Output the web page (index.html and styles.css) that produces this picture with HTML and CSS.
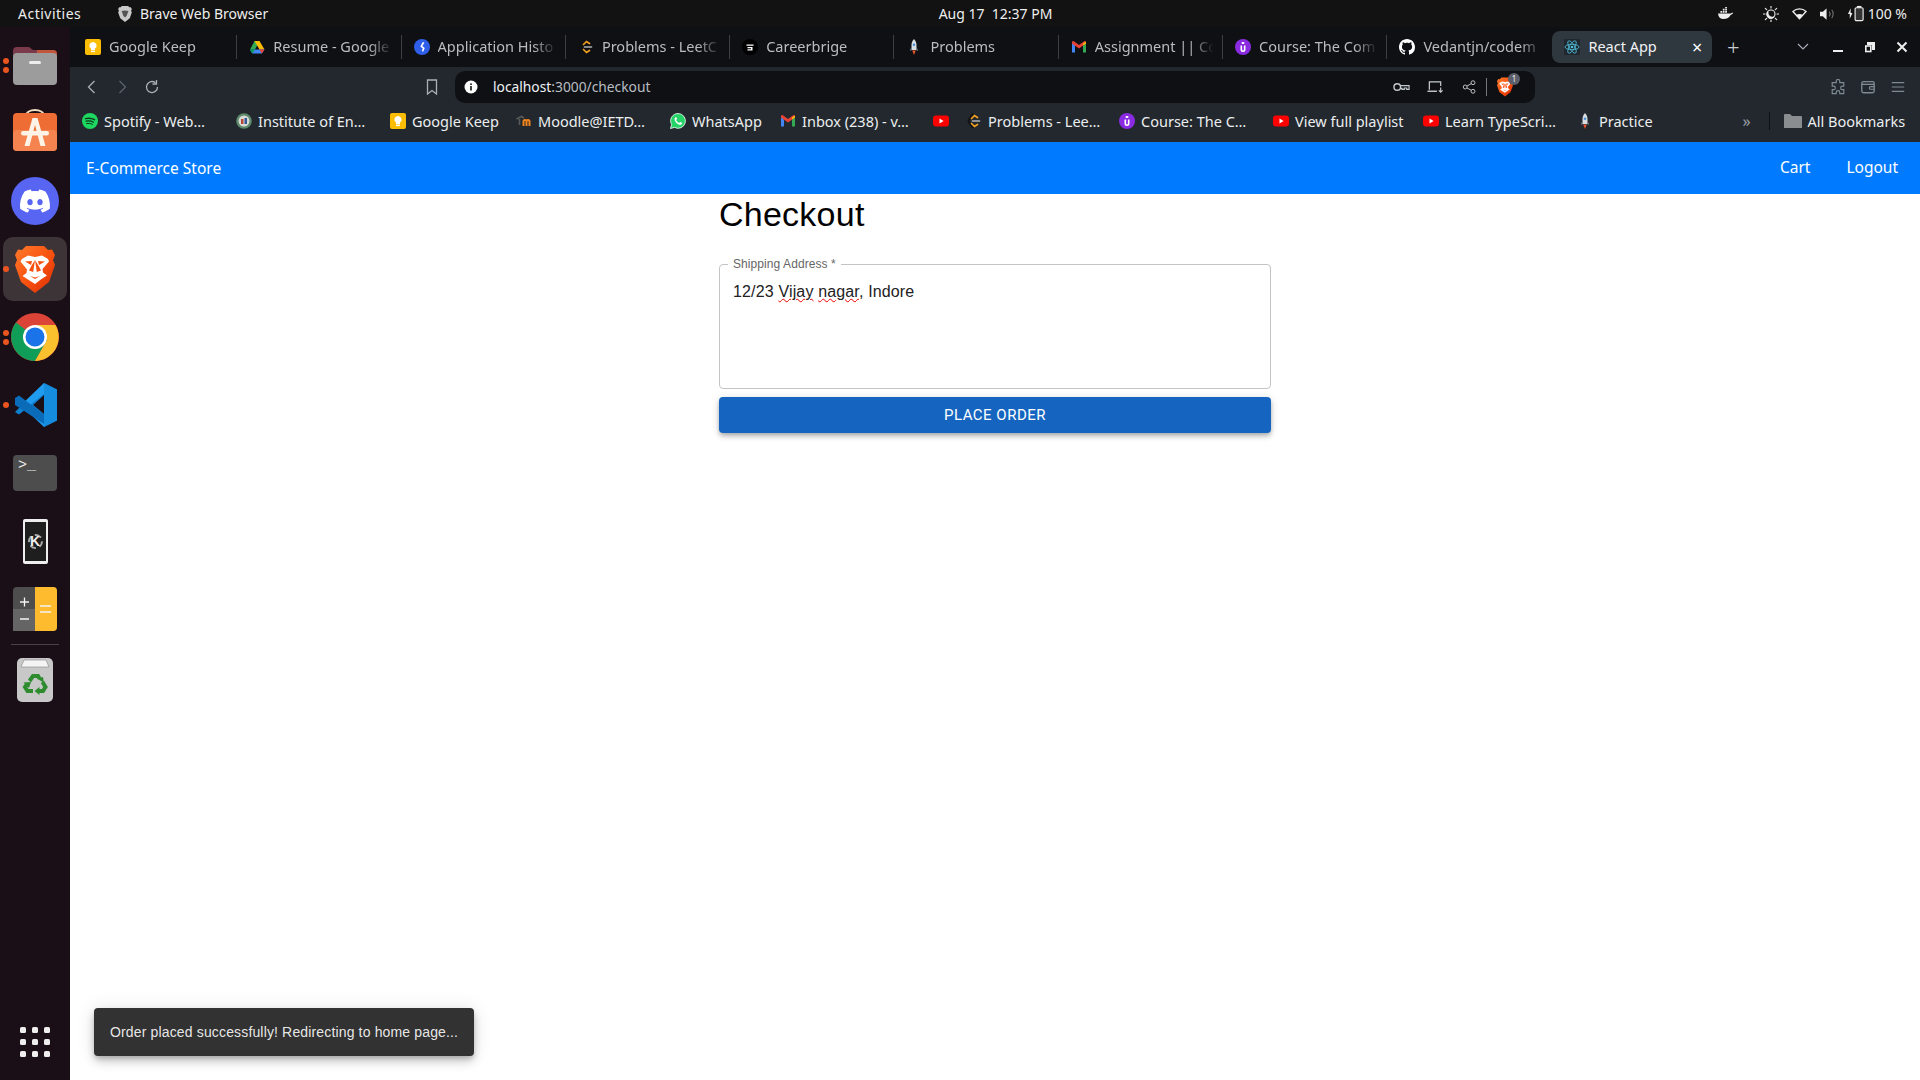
FILE: index.html
```html
<!DOCTYPE html>
<html lang="en">
<head>
<meta charset="UTF-8" />
<title>React App</title>
<link rel="stylesheet" href="styles.css">
</head>
<body>
<svg class="icon-defs" aria-hidden="true">
  <defs>
    <linearGradient id="brave-grad" x1="0" y1="0" x2="1" y2="1">
      <stop offset="0" stop-color="#ff7a2a"/>
      <stop offset=".55" stop-color="#f7500f"/>
      <stop offset="1" stop-color="#d92b06"/>
    </linearGradient>
    <symbol id="i-keep" viewBox="0 0 16 16">
      <rect x="0" y="0" width="16" height="16" rx="2" fill="#fbbc04"/>
      <path d="M8 3a3.6 3.6 0 0 0-2 6.6V11h4V9.600A3.600 3.600 0 0 0 8 3z" fill="#fff"/>
      <rect x="6" y="11.600" width="4" height="1.500" fill="#fff"/>
    </symbol>
    <symbol id="i-drive" viewBox="0 0 16 16">
      <path d="M5.500 1.500h5L6 10H1z" fill="#34a853" transform="translate(0 .5)"/>
      <path d="M5.500 2h5l5 8.500h-5z" fill="#fbbc04"/>
      <path d="M1 11l2.400 3.500h9.400l2.700-4H5z" fill="#4285f4"/>
      <path d="M1 10.500l2.400 4L6 10.500z" fill="#0f9d58"/>
      <path d="M15.500 10.500l-2.700 4-2.300-4z" fill="#ea4335"/>
    </symbol>
    <symbol id="i-apphist" viewBox="0 0 16 16">
      <circle cx="8" cy="8" r="8" fill="#2f5fe8"/>
      <path d="M8.800 3l1.700.8-2.200 3.100 2.500 2-1.700 3.800-1.300-.7 1-2.600-2.500-2z" fill="#fff"/>
    </symbol>
    <symbol id="i-leet" viewBox="0 0 16 16">
      <path d="M7 .5L3 6.500c-.8 1.200-.8 2 0 3l4 5.500" fill="none" stroke="#111" stroke-width="1.800"/>
      <path d="M5.500 5.500L8.500 2.500l3 2" fill="none" stroke="#f0a020" stroke-width="1.700" stroke-linecap="round"/>
      <path d="M5.500 10.500l3 3 3-2" fill="none" stroke="#f0a020" stroke-width="1.700" stroke-linecap="round"/>
      <path d="M6.500 8h7" stroke="#b3b3b3" stroke-width="1.600" stroke-linecap="round"/>
    </symbol>
    <symbol id="i-career" viewBox="0 0 16 16">
      <circle cx="8" cy="8" r="8" fill="#000"/>
      <path d="M4.500 5.500h7v1.200h-7zM5.500 8h5v3.500h-5V10.300h3.500V9.200H5.500z" fill="#fff"/>
    </symbol>
    <symbol id="i-rocket" viewBox="0 0 16 16">
      <path d="M8 0c1.800 1.800 2.500 4 2.500 6v5h-5V6C5.500 4 6.200 1.800 8 0z" fill="#d8dde2"/>
      <circle cx="8" cy="5.800" r="1.300" fill="#4a90d9"/>
      <path d="M5.500 8L3.800 11.500h1.700zM10.500 8l1.700 3.500h-1.700z" fill="#7a8794"/>
      <path d="M6.200 11.500h3.600L8 16z" fill="#e8552b"/>
    </symbol>
    <symbol id="i-gmail" viewBox="0 0 16 16">
      <path d="M1 3.500v10h3V6.500z" fill="#4285f4"/>
      <path d="M15 3.500v10h-3V6.500z" fill="#34a853"/>
      <path d="M1 2.500v2L8 9.500l7-5v-2l-1.500-.5L8 6 2.500 2z" fill="#ea4335"/>
      <path d="M12 4.500L15 2.500v2L12 6.500z" fill="#fbbc04"/>
    </symbol>
    <symbol id="i-course" viewBox="0 0 16 16">
      <circle cx="8" cy="8" r="8" fill="#8a2be2"/>
      <path d="M5.500 6.500v4a2.500 2.500 0 0 0 5 0v-4h-1.600v4a.9.9 0 0 1-1.800 0v-4z" fill="#fff"/>
      <rect x="6.500" y="3" width="3" height="2" rx="1" fill="#fff"/>
    </symbol>
    <symbol id="i-github" viewBox="0 0 16 16">
      <path fill="#fff" d="M8 0C3.580 0 0 3.580 0 8c0 3.540 2.290 6.530 5.470 7.590.4.070.55-.17.55-.38 0-.19-.01-.82-.01-1.490-2.010.37-2.530-.49-2.690-.94-.09-.23-.48-.94-.82-1.130-.28-.15-.68-.52-.01-.53.63-.01 1.080.58 1.230.82.72 1.210 1.870.87 2.330.66.07-.52.28-.87.51-1.070-1.780-.2-3.640-.89-3.640-3.950 0-.87.31-1.590.82-2.150-.08-.2-.36-1.020.08-2.120 0 0 .67-.21 2.200.82.64-.18 1.320-.27 2-.27.68 0 1.360.09 2 .27 1.530-1.040 2.200-.82 2.200-.82.44 1.100.16 1.920.08 2.120.51.56.82 1.270.82 2.150 0 3.070-1.870 3.750-3.650 3.950.29.25.54.73.54 1.480 0 1.070-.01 1.930-.01 2.200 0 .21.15.46.55.38A8.013 8.013 0 0 0 16 8c0-4.420-3.580-8-8-8z"/>
    </symbol>
    <symbol id="i-react" viewBox="0 0 16 16">
      <rect width="16" height="16" rx="1" fill="#20272e"/>
      <g fill="none" stroke="#4fc3dc" stroke-width=".8">
        <ellipse cx="8" cy="8" rx="7" ry="2.700"/>
        <ellipse cx="8" cy="8" rx="7" ry="2.700" transform="rotate(60 8 8)"/>
        <ellipse cx="8" cy="8" rx="7" ry="2.700" transform="rotate(120 8 8)"/>
      </g>
      <circle cx="8" cy="8" r="1.300" fill="#4fc3dc"/>
    </symbol>
    <symbol id="i-spotify" viewBox="0 0 16 16">
      <circle cx="8" cy="8" r="8" fill="#1ed760"/>
      <g fill="none" stroke="#0c3a1c" stroke-linecap="round">
        <path d="M3.500 5.600c3-.8 6.200-.5 9 1" stroke-width="1.500"/>
        <path d="M4 8.200c2.600-.6 5.200-.3 7.500 1" stroke-width="1.200"/>
        <path d="M4.500 10.600c2.200-.5 4.300-.2 6 .8" stroke-width="1"/>
      </g>
    </symbol>
    <symbol id="i-ietdavv" viewBox="0 0 16 16">
      <circle cx="8" cy="8" r="7.800" fill="#5d8a6c"/>
      <circle cx="8" cy="8" r="5.500" fill="#d8dcd4"/>
      <path d="M5 6h2.500v5H5z" fill="#b5473c"/>
      <path d="M8.500 5H11v6H8.500z" fill="#34589a"/>
    </symbol>
    <symbol id="i-moodle" viewBox="0 0 16 16">
      <path d="M7.500 13V8.500c0-2 3-2 3 0V13M10.500 8.500c0-2 3-2 3 0V13" fill="none" stroke="#f2841d" stroke-width="2"/>
      <path d="M.5 6l5-2.500 2.500 1.500M3.500 6v6" fill="none" stroke="#5b5b5b" stroke-width="1.600"/>
    </symbol>
    <symbol id="i-whatsapp" viewBox="0 0 16 16">
      <path d="M8 .5a7.400 7.400 0 0 0-6.400 11.100L.5 15.500l4-1.100A7.400 7.400 0 1 0 8 .5z" fill="#25d366" stroke="#fff" stroke-width=".8"/>
      <path d="M5.500 4.200c-.9.800-1.200 2-.5 3.500.9 2 2.500 3.500 4.500 4 1.200.3 2.300-.3 2.700-1.300l-.2-.6-1.900-.9-.9 1c-1.200-.4-2.500-1.700-3-3l.8-.9-.8-1.900z" fill="#fff"/>
    </symbol>
    <symbol id="i-youtube" viewBox="0 0 16 16">
      <rect y="2.500" width="16" height="11" rx="3" fill="#f00"/>
      <path d="M6.500 5.600v4.800L10.600 8z" fill="#fff"/>
    </symbol>
    <symbol id="i-brave" viewBox="0 0 40 47">
      <path d="M11 0h18l4 4 4-.5 3 5.500-2 5 2 5-6 17-14 11L6 36 0 19l2-5-2-5 3-5.500L7 4z" fill="url(#brave-grad)"/>
      <path d="M7 13l6-3.500 7 1.500 7-1.500 6 3.500 1 2.500-6.500 7.500.5 3.500 4 3-5.500 3.500L20 38l-7-4.500L7.500 30l4-3 .5-3.500L5.500 15.500z" fill="#fff"/>
      <path d="M10 15.500l7-.5-1 4zM30 15.500l-7-.5 1 4z" fill="#f7500f"/>
      <path d="M20 14l-1.800 12-4.200-1.500 2-4zM20 14l1.800 12 4.200-1.500-2-4z" fill="#f7500f"/>
      <path d="M15 30l5 1.500 5-1.500-5 3z" fill="#f7500f"/>
    </symbol>
  </defs>
</svg>

<header class="topbar">
  <div class="topbar-left">
    <span class="activities">Activities</span>
    <svg class="topbar-brave" viewBox="0 0 40 47"><path d="M11 0h18l4 4 4-.5 3 5.500-2 5 2 5-6 17-14 11L6 36 0 19l2-5-2-5 3-5.500L7 4z" fill="#c9c9c9"/><path d="M10 15l10-2 10 2-5 14-5 5-5-5z" fill="#555"/></svg>
    <span>Brave Web Browser</span>
  </div>
  <div class="clock">Aug 17&nbsp; 12:37 PM</div>
  <div class="tray">
    <svg class="tray-docker" viewBox="0 0 20 16" fill="#eee"><path d="M0 8h16c.6-1 1.800-1.300 3-.8-.5 1.500-1.500 2.200-3 2.300C14.500 13 11 15 7 15c-4 0-6.500-2.500-7-7z"/><path d="M3 5h2.200v2.200H3zM6 5h2.200v2.200H6zM9 5h2.200v2.200H9zM6 2h2.200v2.200H6zM9 2h2.200v2.200H9zM9-.8h2.200v2.200H9z"/></svg>
    <svg class="tray-night" viewBox="0 0 16 16" fill="none" stroke="#eee" stroke-width="1.100"><circle cx="8" cy="8" r="4"/><path d="M5 5.500a4 4 0 0 0 6 5.500 4.500 4.500 0 0 1-6-5.500z" fill="#eee"/><path d="M8 0v2M8 14v2M0 8h2M14 8h2M2.300 2.300l1.400 1.400M12.300 12.300l1.400 1.400M2.300 13.700l1.400-1.400M12.300 3.700l1.400-1.400" stroke-linecap="round"/></svg>
    <svg class="tray-wifi" viewBox="0 0 16 12"><path d="M8 11L1 3.300C5-.3 11-.3 15 3.300z" fill="none" stroke="#eee" stroke-width="1.400"/><path d="M8 11L4.500 7c2-1.500 5-1.500 7 0z" fill="#eee"/></svg>
    <svg class="tray-volume" viewBox="0 0 16 14"><path d="M0 4.500h3L7 1v12L3 9.500H0z" fill="#eee"/><path d="M10 4.500c1 1.500 1 3.500 0 5M12.500 2.500c2 2.500 2 6.500 0 9" fill="none" stroke="#777" stroke-width="1.100"/></svg>
    <svg class="tray-battery" viewBox="0 0 18 18"><path d="M3 3L0 9.500h2V15l3-6.500H3z" fill="#eee"/><rect x="8" y="2.500" width="9" height="14.500" rx="1.500" fill="#333" stroke="#eee" stroke-width="1.300"/><rect x="10" y=".5" width="5" height="2" fill="#eee"/></svg>
    <span class="battery-text">100 %</span>
  </div>
</header>

<div class="workspace">
  <aside class="dock">
    <div class="dock-item">
      <span class="dots"><i></i><i></i></span>
      <svg class="dock-icon" viewBox="0 0 44 40">
        <path d="M0 6a4 4 0 0 1 4-4h12l4 3h20a4 4 0 0 1 4 4v10H0z" fill="#7b3a4c"/>
        <path d="M24 5h16a4 4 0 0 1 4 4v6H24z" fill="#c0573a"/>
        <rect y="8" width="44" height="32" rx="4" fill="#9c9c9c"/>
        <rect x="16" y="16" width="12" height="3" rx="1.500" fill="#eee"/>
      </svg>
    </div>
    <div class="dock-item">
      <svg class="dock-store" viewBox="0 0 44 44">
        <path d="M13 7c0-8 18-8 18 0" fill="none" stroke="#f0dcc0" stroke-width="1.800"/>
        <rect y="4" width="44" height="38" rx="4" fill="#ee6d35"/>
        <rect y="21" width="44" height="21" rx="4" fill="#f4834f"/>
        <path d="M19.500 9h5l8 28h-5l-5.500-21-5.500 21h-5z" fill="#fdf3e7"/>
        <rect x="8" y="22" width="28" height="4.500" rx="2.250" fill="#fdf3e7"/>
      </svg>
    </div>
    <div class="dock-item">
      <svg class="dock-circle" viewBox="0 0 48 48">
        <circle cx="24" cy="24" r="24" fill="#5865f2"/>
        <g transform="translate(9 9) scale(1.250)"><path fill="#fff" d="M20.317 4.370a19.791 19.791 0 0 0-4.885-1.515.074.074 0 0 0-.079.037c-.211.375-.445.865-.608 1.250-1.845-.276-3.680-.276-5.487 0-.164-.393-.406-.874-.618-1.250a.077.077 0 0 0-.079-.037 19.736 19.736 0 0 0-4.885 1.515.07.07 0 0 0-.032.028C.533 9.046-.319 13.580.099 18.058a.082.082 0 0 0 .031.056c2.053 1.508 4.041 2.423 5.993 3.029a.078.078 0 0 0 .084-.028c.462-.630.873-1.295 1.226-1.994a.076.076 0 0 0-.042-.106c-.653-.248-1.274-.550-1.872-.892a.077.077 0 0 1-.008-.128c.126-.094.252-.192.372-.291a.074.074 0 0 1 .078-.011c3.928 1.793 8.180 1.793 12.061 0a.074.074 0 0 1 .079.010c.120.099.246.198.373.292a.077.077 0 0 1-.007.128 12.299 12.299 0 0 1-1.873.891.077.077 0 0 0-.041.107c.360.698.772 1.363 1.225 1.993a.076.076 0 0 0 .084.029c1.961-.607 3.950-1.522 6.002-3.029a.077.077 0 0 0 .031-.055c.500-5.177-.838-9.674-3.548-13.660a.061.061 0 0 0-.031-.029zM8.020 15.331c-1.183 0-2.157-1.086-2.157-2.419 0-1.333.956-2.419 2.157-2.419 1.211 0 2.176 1.095 2.157 2.419 0 1.333-.956 2.419-2.157 2.419zm7.975 0c-1.183 0-2.157-1.086-2.157-2.419 0-1.333.955-2.419 2.157-2.419 1.211 0 2.176 1.095 2.157 2.419 0 1.333-.946 2.419-2.157 2.419z"/></g>
      </svg>
    </div>
    <div class="dock-item is-active">
      <span class="dots"><i></i></span>
      <svg class="dock-brave"><use href="#i-brave"/></svg>
    </div>
    <div class="dock-item">
      <span class="dots"><i></i><i></i></span>
      <svg class="dock-circle" viewBox="0 0 48 48">
        <circle cx="24" cy="24" r="24" fill="#db4437"/>
        <path d="M24 24L5 9.500A24 24 0 0 0 24 48l12-21z" fill="#0f9d58"/>
        <path d="M24 12h20.500a24 24 0 0 1-20.500 36l12-21z" fill="#fbc02d"/>
        <circle cx="24" cy="24" r="12" fill="#fff"/>
        <circle cx="24" cy="24" r="9.500" fill="#1a73e8"/>
      </svg>
    </div>
    <div class="dock-item">
      <span class="dots"><i></i></span>
      <svg class="dock-icon" viewBox="0 0 44 44">
        <path d="M31 0l13 6.500v31L31 44 8 22z" fill="#1f9cf0"/>
        <path d="M31 0v44l13-6.500v-31z" fill="#0f7fd0" opacity=".55"/>
        <path d="M31 11L13 25l-7-5.500-4 2.500 7 0L2 29l4 2.500 7-5.500 18 14V31L20 22l11-9z" fill="#0f7fd0"/>
        <path d="M2 15l4-2.500 25 19V41L2 22z" fill="#0a6cb8"/>
        <path d="M31 12v19l-11-9z" fill="#1a1016"/>
      </svg>
    </div>
    <div class="dock-item">
      <div class="terminal">
        <span class="prompt">&gt;_</span>
      </div>
    </div>
    <div class="dock-item">
      <div class="phone"><span class="kde-gear"></span><span class="kde">K</span></div>
    </div>
    <div class="dock-item">
      <svg class="dock-icon" viewBox="0 0 44 44">
        <rect width="44" height="44" rx="4" fill="#4d4d4d"/>
        <rect y="22" width="22" height="22" fill="#656565"/>
        <path d="M22 0h18a4 4 0 0 1 4 4v36a4 4 0 0 1-4 4H22z" fill="#fdbb2d"/>
        <path d="M7 15h9M11.500 10.500v9M7 32h9M27 19h11M27 25h11" stroke="#f4f4f4" stroke-width="1.300"/>
      </svg>
    </div>
    <div class="dock-sep"></div>
    <div class="dock-item">
      <svg class="dock-trash" viewBox="0 0 36 44">
        <rect width="36" height="44" rx="5" fill="#c8c8c8"/>
        <path d="M4 9l3-7h22l3 7z" fill="#f4f4f4" stroke="#888" stroke-width=".6"/>
        <g fill="none" stroke="#2e8b2e" stroke-width="4">
          <path d="M12.500 23l3.500-5h5l1.500 2.500"/>
          <path d="M25.500 24l3 5-2.500 4h-4"/>
          <path d="M16 33h-5.500l-2.500-4 2.500-3.500"/>
        </g>
        <g fill="#2e8b2e">
          <path d="M20 20.500l6-1.500 1 6z"/>
          <path d="M22.500 29v8l-5-4z"/>
          <path d="M6.500 24.500l7.500-.5-2 6z"/>
        </g>
      </svg>
    </div>
    <div class="app-grid">
      <i></i><i></i><i></i><i></i><i></i><i></i><i></i><i></i><i></i>
    </div>
  </aside>

  <div class="browser">
    <div class="tabstrip">
      <div class="tab"><svg class="favicon"><use href="#i-keep"/></svg><span class="tab-title">Google Keep</span></div>
      <div class="tab"><svg class="favicon"><use href="#i-drive"/></svg><span class="tab-title">Resume - Google</span></div>
      <div class="tab"><svg class="favicon"><use href="#i-apphist"/></svg><span class="tab-title">Application Histo</span></div>
      <div class="tab"><svg class="favicon"><use href="#i-leet"/></svg><span class="tab-title">Problems - LeetC</span></div>
      <div class="tab"><svg class="favicon"><use href="#i-career"/></svg><span class="tab-title">Careerbrige</span></div>
      <div class="tab"><svg class="favicon"><use href="#i-rocket"/></svg><span class="tab-title">Problems</span></div>
      <div class="tab"><svg class="favicon"><use href="#i-gmail"/></svg><span class="tab-title">Assignment || Co</span></div>
      <div class="tab"><svg class="favicon"><use href="#i-course"/></svg><span class="tab-title">Course: The Com</span></div>
      <div class="tab tab-last"><svg class="favicon"><use href="#i-github"/></svg><span class="tab-title">Vedantjn/codem</span></div>
      <div class="tab is-active"><svg class="favicon"><use href="#i-react"/></svg><span class="tab-title">React App</span><span class="tab-close">&times;</span></div>
      <span class="new-tab">+</span>
      <div class="window-controls">
        <svg class="wc wc-list" viewBox="0 0 12 8"><path d="M1 1l5 5 5-5" fill="none" stroke="#aab" stroke-width="1.200"/></svg>
        <svg class="wc" viewBox="0 0 12 12"><path d="M1 10h10" stroke="#eee" stroke-width="2"/></svg>
        <svg class="wc" viewBox="0 0 12 12"><path d="M3 1h8v8H8V4H3z" fill="#eee"/><rect x="1.800" y="5" width="5" height="5.500" fill="none" stroke="#eee" stroke-width="1.600"/></svg>
        <svg class="wc" viewBox="0 0 12 12"><path d="M1.500 1.500l9 9M10.500 1.500l-9 9" stroke="#eee" stroke-width="2"/></svg>
      </div>
    </div>

    <div class="toolbar">
      <svg class="tool" viewBox="0 0 16 16"><path d="M10.500 2L4.500 8l6 6" fill="none" stroke="#a9b0b6" stroke-width="1.300"/></svg>
      <svg class="tool" viewBox="0 0 16 16"><path d="M5.500 2l6 6-6 6" fill="none" stroke="#5c646b" stroke-width="1.300"/></svg>
      <svg class="tool" viewBox="0 0 16 16"><path d="M13.500 8A5.500 5.500 0 1 1 11.500 3.800" fill="none" stroke="#a9b0b6" stroke-width="1.300"/><path d="M12.500 1v4h-4" fill="none" stroke="#a9b0b6" stroke-width="1.300"/></svg>
      <svg class="tool tool-bookmark" viewBox="0 0 16 16"><path d="M3.500 1h9v14L8 11.500 3.500 15z" fill="none" stroke="#a9b0b6" stroke-width="1.300"/></svg>
      <div class="addressbar">
        <svg class="addr-info" viewBox="0 0 14 14"><circle cx="7" cy="7" r="6.500" fill="#fff"/><rect x="6.200" y="6" width="1.600" height="4.500" fill="#111"/><rect x="6.200" y="3.400" width="1.600" height="1.600" fill="#111"/></svg>
        <span class="url"><b>localhost</b>:3000/checkout</span>
        <svg class="addr-tool" viewBox="0 0 18 12"><circle cx="4.500" cy="6" r="3.500" fill="none" stroke="#c6cbd0" stroke-width="1.500"/><path d="M8 4.500h9v4h-2.500V7H12v1.500H9.500V7.500H8" fill="none" stroke="#c6cbd0" stroke-width="1.200"/></svg>
        <svg class="addr-tool" viewBox="0 0 18 14"><path d="M2.500 10V1.500h12V6" fill="none" stroke="#c6cbd0" stroke-width="1.300"/><path d="M.5 11.500h10" stroke="#c6cbd0" stroke-width="1.500"/><path d="M14.500 7.500v5M12.500 10.500l2 2 2-2" fill="none" stroke="#c6cbd0" stroke-width="1.200"/></svg>
        <svg class="addr-tool addr-share" viewBox="0 0 18 18"><g fill="none" stroke="#c6cbd0" stroke-width="1.200"><circle cx="3.500" cy="9" r="2.500"/><circle cx="13.500" cy="3.500" r="2.500"/><circle cx="13.500" cy="14.500" r="2.500"/><path d="M5.700 7.800l5.600-3.100M5.700 10.200l5.600 3.100"/></g></svg>
        <span class="addr-sep"></span>
        <span class="shields"><svg><use href="#i-brave"/></svg><span class="shields-badge">1</span></span>
      </div>
      <svg class="tool tool-ext" viewBox="0 0 18 18"><path d="M7 2.500a2 2 0 0 1 4 0V4h4.500v4H14a2 2 0 0 0 0 4h1.500v4.500H11V15a2 2 0 0 0-4 0v1.500H2.500V12H4a2 2 0 0 0 0-4H2.500V4H7z" fill="none" stroke="#7f8a92" stroke-width="1.300"/></svg>
      <svg class="tool" viewBox="0 0 18 18"><rect x="2" y="3" width="14" height="12.500" rx="2" fill="none" stroke="#7f8a92" stroke-width="1.500"/><path d="M2 6h14" stroke="#7f8a92" stroke-width="1.500"/><path d="M16 8.500h-4a1.500 1.500 0 0 0 0 3h4" fill="none" stroke="#7f8a92" stroke-width="1.300"/></svg>
      <svg class="tool" viewBox="0 0 18 18"><path d="M2 4h14M2 9h14M2 14h14" stroke="#7f8a92" stroke-width="1.300"/></svg>
    </div>

    <nav class="bookmarks">
      <a class="bm"><svg class="favicon"><use href="#i-spotify"/></svg>Spotify - Web…</a>
      <a class="bm"><svg class="favicon"><use href="#i-ietdavv"/></svg>Institute of En…</a>
      <a class="bm"><svg class="favicon"><use href="#i-keep"/></svg>Google Keep</a>
      <a class="bm"><svg class="favicon"><use href="#i-moodle"/></svg>Moodle@IETD…</a>
      <a class="bm"><svg class="favicon"><use href="#i-whatsapp"/></svg>WhatsApp</a>
      <a class="bm"><svg class="favicon"><use href="#i-gmail"/></svg>Inbox (238) - v…</a>
      <a class="bm"><svg class="favicon"><use href="#i-youtube"/></svg></a>
      <a class="bm"><svg class="favicon"><use href="#i-leet"/></svg>Problems - Lee…</a>
      <a class="bm"><svg class="favicon"><use href="#i-course"/></svg>Course: The C…</a>
      <a class="bm"><svg class="favicon"><use href="#i-youtube"/></svg>View full playlist</a>
      <a class="bm"><svg class="favicon"><use href="#i-youtube"/></svg>Learn TypeScri…</a>
      <a class="bm"><svg class="favicon"><use href="#i-rocket"/></svg>Practice</a>
      <span class="bm-more">»</span>
      <span class="bm-sep"></span>
      <a class="bm bm-all">
        <svg class="bm-folder" viewBox="0 0 18 16"><path d="M0 2a1 1 0 0 1 1-1h5l2 2h9a1 1 0 0 1 1 1v11H0z" fill="#8a8d90"/></svg>
        All Bookmarks
      </a>
    </nav>

    <div class="page">
      <div class="appbar">
        <span class="brand">E-Commerce Store</span>
        <div class="appbar-links">
          <a>Cart</a>
          <a>Logout</a>
        </div>
      </div>
      <main class="checkout">
        <h1>Checkout</h1>
        <div class="field">
          <label>Shipping Address *</label>
          <div class="field-value">12/23 <span class="misspelled">Vijay</span> <span class="misspelled">nagar</span>, Indore</div>
        </div>
        <button class="place-order">Place Order</button>
      </main>
      <div class="toast">Order placed successfully! Redirecting to home page...</div>
    </div>
  </div>
</div>
</body>
</html>
```

FILE: styles.css
```css
/* Reset & base */
* {
  box-sizing: border-box;
}
html, body {
  margin: 0;
  height: 100%;
  overflow: hidden;
}
body {
  width: 1920px;
  height: 1080px;
  display: flex;
  flex-direction: column;
  font-family: "Noto Sans", sans-serif;
  background: #fff;
}
.icon-defs {
  position: absolute;
  width: 0;
  height: 0;
}

/* GNOME top bar */
.topbar {
  height: 27px;
  background: #121212;
  color: #eee;
  font-size: 14px;
  display: grid;
  grid-template-columns: 1fr auto 1fr;
  align-items: center;
  padding: 0 13px 0 18px;
}
.topbar-left {
  display: flex;
  align-items: center;
}
.activities {
  width: 100px;
  letter-spacing: 0.5px;
}
.topbar-brave {
  width: 14px;
  height: 16px;
  margin-right: 8px;
}
.clock {
  font-size: 14px;
  margin-left: 66px;
}
.tray {
  display: flex;
  align-items: center;
  justify-content: flex-end;
}
.tray svg {
  display: block;
}
.tray-docker { width: 16px; height: 13px; margin-right: 29px; }
.tray-night { width: 16px; height: 16px; margin-right: 13px; }
.tray-wifi { width: 15px; height: 12px; margin-right: 13px; }
.tray-volume { width: 15px; height: 14px; margin-right: 13px; }
.tray-battery { width: 16px; height: 17px; margin-right: 4px; }

.workspace {
  flex: 1;
  display: flex;
  min-height: 0;
}

/* Dock */
.dock {
  width: 70px;
  background: #1a0f17;
  padding-top: 4px;
  display: flex;
  flex-direction: column;
  align-items: center;
  flex-shrink: 0;
}
.dock-item {
  position: relative;
  width: 64px;
  height: 68px;
  display: flex;
  align-items: center;
  justify-content: center;
}
.dock-item.is-active::before {
  content: "";
  position: absolute;
  inset: 2px 0;
  background: #3d3438;
  border-radius: 10px;
}
.dock-item svg,
.dock-item > div {
  position: relative;
}
.dots {
  position: absolute;
  left: 0;
  top: 0;
  bottom: 0;
  width: 6px;
  display: flex;
  flex-direction: column;
  justify-content: center;
  gap: 3px;
  z-index: 1;
}
.dots i {
  width: 6px;
  height: 6px;
  border-radius: 50%;
  background: #e95420;
}
.dock-icon { width: 44px; height: 44px; }
.dock-store { width: 44px; height: 44px; margin-bottom: 4px; }
.dock-circle { width: 48px; height: 48px; }
.dock-brave { width: 40px; height: 47px; }
.dock-trash { width: 36px; height: 44px; }
.terminal {
  width: 44px;
  height: 36px;
  background: #4d4d4d;
  border-radius: 4px;
  color: #eee;
  font: 15px/1 "Liberation Mono", monospace;
  padding: 3px 5px;
}
.phone {
  width: 25px;
  height: 45px;
  background: #1e1e1e;
  border: 2px solid #eee;
  border-top-width: 3px;
  border-bottom-width: 3px;
  border-radius: 2px;
  display: flex;
  align-items: center;
  justify-content: center;
}
.kde-gear {
  position: absolute;
  width: 15px;
  height: 15px;
  border: 2px dashed #aaa;
  border-radius: 50%;
}
.kde {
  position: relative;
  color: #eee;
  font: bold 14px "Liberation Sans", sans-serif;
}
.dock-sep {
  width: 48px;
  height: 1px;
  background: #4a4046;
  margin: 1px 0 1px;
}
.app-grid {
  margin-top: auto;
  margin-bottom: 23px;
  display: grid;
  grid-template-columns: repeat(3, 6px);
  gap: 6px;
}
.app-grid i {
  width: 6px;
  height: 6px;
  background: #eee;
  border-radius: 1.500px;
}

/* Browser chrome */
.browser {
  flex: 1;
  display: flex;
  flex-direction: column;
  min-width: 0;
}
.favicon {
  width: 16px;
  height: 16px;
  flex-shrink: 0;
}
.tabstrip {
  height: 40px;
  background: #0e1014;
  display: flex;
  align-items: center;
  padding: 0 0 1px 3px;
  color: #b9bdc1;
  font-size: 14.500px;
}
.tab {
  width: 164.300px;
  height: 24px;
  padding: 0 8px 0 12px;
  display: flex;
  align-items: center;
  gap: 8px;
  border-right: 1px solid #3a3f44;
}
.tab-title {
  flex: 1;
  min-width: 0;
  padding-bottom: 1px;
  white-space: nowrap;
  -webkit-mask-image: linear-gradient(to right, #000 80%, transparent);
  mask-image: linear-gradient(to right, #000 80%, transparent);
}
.tab-last {
  width: 165px;
  border-right: none;
}
.tab.is-active {
  width: 160px;
  height: 32px;
  background: #30383f;
  border-radius: 8px;
  border: none;
  color: #f0f2f4;
  padding: 0 10px 0 12px;
}
.is-active .tab-title {
  -webkit-mask-image: none;
  mask-image: none;
}
.tab-close {
  font-size: 18px;
  line-height: 1;
  color: #fff;
}
.new-tab {
  width: 20px;
  margin-left: 11px;
  text-align: center;
  font-size: 22px;
  font-weight: 300;
  color: #c8cdd2;
  line-height: 1;
}
.window-controls {
  margin-left: auto;
  display: flex;
  align-items: center;
}
.wc {
  width: 12px;
  height: 12px;
  margin-right: 20px;
}
.wc-list {
  height: 8px;
  margin-right: 23px;
}
.wc:last-child {
  margin-right: 12px;
}

.toolbar {
  height: 36px;
  background: #22282d;
  display: flex;
  align-items: center;
  padding: 4px 0 0 14px;
}
.tool {
  width: 16px;
  height: 16px;
  margin-right: 14px;
  flex-shrink: 0;
}
.tool-bookmark {
  margin-left: 250px;
  margin-right: 15px;
}
.tool-ext {
  margin-left: 295px;
}
.addressbar {
  width: 1080px;
  height: 32px;
  background: #0e1014;
  border-radius: 10px;
  display: flex;
  align-items: center;
  padding: 0 22px 0 9px;
  color: #b9bdc1;
  font-size: 13.800px;
}
.addr-info {
  width: 14px;
  height: 14px;
  margin-right: 15px;
}
.url {
  flex: 1;
  padding-bottom: 2px;
}
.url b {
  font-weight: 400;
  color: #f0f2f4;
}
.addr-tool {
  width: 17px;
  height: 14px;
  margin-right: 17px;
}
.addr-share {
  margin-right: 8px;
}
.addr-sep {
  width: 1px;
  height: 18px;
  background: #777;
  margin-right: 10px;
}
.shields {
  position: relative;
  display: block;
  width: 16px;
  height: 20px;
}
.shields svg {
  width: 16px;
  height: 20px;
  display: block;
}
.shields-badge {
  position: absolute;
  top: -4px;
  right: -7px;
  width: 12px;
  height: 12px;
  border-radius: 50%;
  background: #5c5f6a;
  color: #eee;
  font-size: 8px;
  line-height: 12px;
  text-align: center;
}

.bookmarks {
  height: 39px;
  background: #22282d;
  color: #eceef0;
  font-size: 14.500px;
  padding: 0 0 3px 12px;
  display: grid;
  grid-template-columns: 154px 154px 126px 154px 110px 153px 33px 153px 154px 150px 154px 165.500px 26px 15px auto;
  align-items: center;
}
.bm {
  display: flex;
  align-items: center;
  gap: 6px;
  white-space: nowrap;
}
.bm-more {
  font-size: 16px;
  color: #9aa0a6;
}
.bm-sep {
  width: 1px;
  height: 18px;
  background: #0e1014;
}
.bm-folder {
  width: 18px;
  height: 16px;
}

/* The app itself */
.page {
  flex: 1;
  position: relative;
  background: #fff;
}
.appbar {
  height: 52px;
  background: #007bff;
  color: #fff;
  font-size: 15.500px;
  display: flex;
  align-items: center;
  justify-content: space-between;
  padding: 0 22px 1px 16px;
}
.appbar-links {
  display: flex;
  gap: 36px;
  padding-bottom: 2px;
}
.checkout {
  width: 552px;
  margin-left: 649px;
}
.checkout h1 {
  font: 400 34px/40px "Liberation Sans", sans-serif;
  letter-spacing: 0.25px;
  color: #000;
  margin: 0 0 30px;
}
.field {
  position: relative;
  height: 125px;
  border: 1px solid #c4c4c4;
  border-radius: 4px;
  padding: 15px 13px;
}
.field label {
  position: absolute;
  top: -8px;
  left: 8px;
  background: #fff;
  padding: 0 5px;
  color: #666;
  font: 12px/14px "Liberation Sans", sans-serif;
  letter-spacing: 0.08px;
}
.field-value {
  font: 16px/23px "Liberation Sans", sans-serif;
  letter-spacing: 0.15px;
  color: #222;
}
.misspelled {
  text-decoration: underline wavy #e00;
  text-decoration-thickness: 1px;
}
.place-order {
  display: block;
  width: 100%;
  height: 36px;
  margin-top: 8px;
  border: none;
  border-radius: 4px;
  background: #1565c0;
  color: #fff;
  font: 400 15px "Roboto", sans-serif;
  letter-spacing: 0.5px;
  text-transform: uppercase;
  box-shadow: 0 2px 4px -1px rgba(0,0,0,.2), 0 4px 5px 0 rgba(0,0,0,.14), 0 1px 10px 0 rgba(0,0,0,.12);
}
.toast {
  position: absolute;
  left: 24px;
  bottom: 24px;
  width: 380px;
  height: 48px;
  background: #323232;
  border-radius: 4px;
  color: rgba(255,255,255,.9);
  font: 14px/48px "Liberation Sans", sans-serif;
  letter-spacing: 0.15px;
  padding: 0 16px;
  white-space: nowrap;
  box-shadow: 0 3px 5px -1px rgba(0,0,0,.2), 0 6px 10px 0 rgba(0,0,0,.14), 0 1px 18px 0 rgba(0,0,0,.12);
}
```
